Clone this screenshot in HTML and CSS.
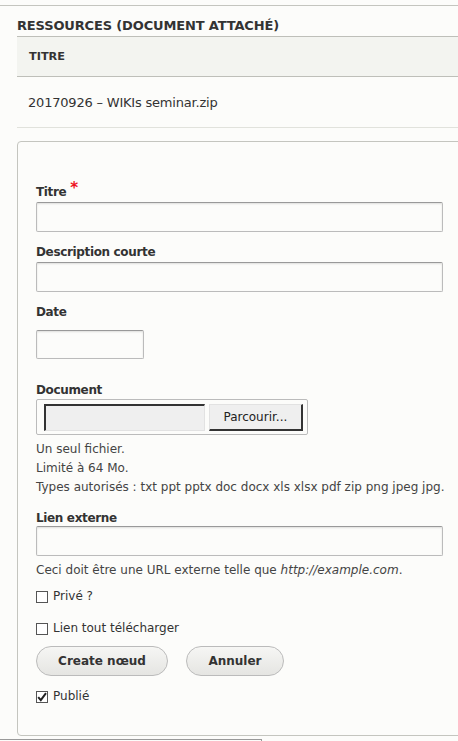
FILE: index.html
```html
<!DOCTYPE html>
<html lang="fr">
<head>
<meta charset="utf-8">
<title>Ressources</title>
<link rel="stylesheet" href="styles.css">
</head>
<body>
<div class="page">
  <div class="content">
    <h2 class="title">Ressources (document attaché)</h2>
    <table class="res-table">
      <thead><tr><th>Titre</th></tr></thead>
      <tbody><tr><td>20170926 – WIKIs seminar.zip</td></tr></tbody>
    </table>
    <fieldset class="form-box">
      <div class="item">
        <label class="lbl">Titre <span class="req">*</span></label>
        <input class="text" type="text">
      </div>
      <div class="item">
        <label class="lbl">Description courte</label>
        <input class="text" type="text">
      </div>
      <div class="item item-date">
        <label class="lbl">Date</label>
        <input class="text date" type="text">
      </div>
      <div class="item item-doc">
        <label class="lbl">Document</label>
        <div class="file">
          <span class="file-field"></span>
          <span class="file-btn">Parcourir...</span>
        </div>
        <div class="desc">Un seul fichier.</div>
        <div class="desc">Limité à 64 Mo.</div>
        <div class="desc">Types autorisés : txt ppt pptx doc docx xls xlsx pdf zip png jpeg jpg.</div>
      </div>
      <div class="item item-link">
        <label class="lbl">Lien externe</label>
        <input class="text" type="text">
        <div class="desc">Ceci doit être une URL externe telle que <em>http://example.com</em>.</div>
      </div>
      <div class="check check-priv"><span class="box"></span>Privé ?</div>
      <div class="check"><span class="box"></span>Lien tout télécharger</div>
      <div class="actions">
        <button class="btn btn-create" type="button">Create nœud</button>
        <button class="btn btn-cancel" type="button">Annuler</button>
      </div>
      <div class="check check-pub"><span class="box"><svg viewBox="0 0 12 12" width="12" height="12"><path d="M2.2 6.2 L4.8 9.2 L10 2.2" fill="none" stroke="#222" stroke-width="2"/></svg></span>Publié</div>
    </fieldset>
  </div>
  <div class="bottom-box"></div>
</div>
</body>
</html>
```
FILE: styles.css
```css
html, body {
  margin: 0;
  padding: 0;
  background: #fcfcfa;
}
body {
  font-family: "DejaVu Sans", "Liberation Sans", sans-serif;
  color: #333;
  overflow: hidden;
}
.page {
  width: 458px;
  height: 741px;
  overflow: hidden;
  position: relative;
}
.content {
  margin-top: 5px;
  border-top: 1px solid #c4c5bf;
  padding-left: 17px;
}
.title {
  margin: 0;
  padding-top: 13px;
  height: 17px;
  font-size: 13px;
  letter-spacing: -0.15px;
  line-height: 14px;
  font-weight: bold;
  text-transform: uppercase;
  color: #333;
}
.res-table {
  border-collapse: collapse;
  width: 460px;
}
.res-table th {
  text-align: left;
  background: #f3f4f0;
  border-top: 1px solid #bebfb9;
  border-bottom: 1px solid #bebfb9;
  height: 39px;
  padding: 0 0 0 12px;
  font-size: 11.3px;
  font-weight: bold;
  text-transform: uppercase;
  color: #333;
}
.res-table td {
  height: 50px;
  padding: 0 0 0 11px;
  border-bottom: 1px solid #e1e2dc;
  font-size: 13px;
  letter-spacing: -0.2px;
  color: #333;
}
.form-box {
  margin: 13px 0 0 0;
  width: 480px;
  box-sizing: border-box;
  border: 1px solid #c4c5bf;
  border-radius: 4px 0 0 4px;
  padding: 42px 0 30px 18px;
  min-inline-size: 0;
}
.item {
  margin-bottom: 12px;
}
.lbl {
  display: block;
  font-size: 12px;
  letter-spacing: -0.35px;
  line-height: 17px;
  font-weight: bold;
  color: #333;
  margin-bottom: 1px;
}
.req {
  color: #e12;
  font-size: 15px;
  line-height: 0;
  letter-spacing: 0;
  vertical-align: 3px;
}
.text {
  display: block;
  box-sizing: border-box;
  width: 407px;
  height: 30px;
  margin: 0;
  border: 1px solid #bbb;
  border-top-color: #999;
  border-radius: 2px;
  background: #fcfcfa;
  box-shadow: inset 0 1px 2px rgba(0,0,0,0.12);
}
.item-date .lbl {
  margin-bottom: 9px;
}
.text.date {
  width: 108px;
  height: 29px;
}
.item-date {
  margin-bottom: 23px;
}
.item-doc .lbl {
  margin-bottom: 0;
}
.file {
  display: flex;
  align-items: center;
  box-sizing: border-box;
  width: 272px;
  height: 36px;
  border: 1px solid #bbb;
  border-radius: 2px;
  padding: 3px 4px 3px 7px;
  gap: 4px;
  background: #fcfcfa;
}
.file-field {
  display: block;
  width: 162px;
  height: 27px;
  box-sizing: border-box;
  background: #efefef;
  border-top: 2px solid #333;
  border-left: 2px solid #333;
  border-right: 1px solid #e2e2e2;
  border-bottom: 1px solid #e2e2e2;
}
.file-btn {
  display: flex;
  align-items: center;
  justify-content: center;
  width: 95px;
  height: 27px;
  box-sizing: border-box;
  background: #efefef;
  border: 1px solid #e2e2e2;
  border-right: 2px solid #333;
  border-bottom: 2px solid #333;
  font-size: 12px;
  color: #222;
}
.desc {
  font-size: 12px;
  line-height: 19px;
  color: #444;
}
.item-doc .file {
  margin-bottom: 5px;
}
.item-doc {
  margin-bottom: 13px;
}
.item-link .lbl {
  margin-bottom: -1px;
}
.item-link .text {
  margin-bottom: 5px;
}
.item-link {
  margin-bottom: 8px;
}
.check {
  display: flex;
  align-items: center;
  font-size: 12px;
  line-height: 17px;
  color: #333;
  margin-bottom: 14px;
}
.check-priv {
  margin-bottom: 15px;
}
.box {
  display: inline-block;
  width: 12px;
  height: 12px;
  box-sizing: border-box;
  border: 1px solid #555;
  background: #fff;
  margin-right: 5px;
  position: relative;
}
.box svg {
  position: absolute;
  left: -1px;
  top: -1px;
}
.actions {
  display: flex;
  gap: 18px;
  margin: -5px 0 12px;
}
.btn {
  height: 30px;
  box-sizing: border-box;
  border: 1px solid #bbb;
  border-radius: 15px;
  background: linear-gradient(#f6f6f4, #e5e5e2);
  font-family: "DejaVu Sans", sans-serif;
  font-size: 12px;
  font-weight: bold;
  color: #333;
  padding: 0;
}
.btn-create { width: 132px; }
.btn-cancel { width: 98px; }
.check-pub {
  margin-bottom: 0;
}
.bottom-box {
  position: absolute;
  left: 0;
  top: 739px;
  width: 261px;
  height: 10px;
  border-top: 1px solid #999;
  border-right: 1px solid #999;
}
```
